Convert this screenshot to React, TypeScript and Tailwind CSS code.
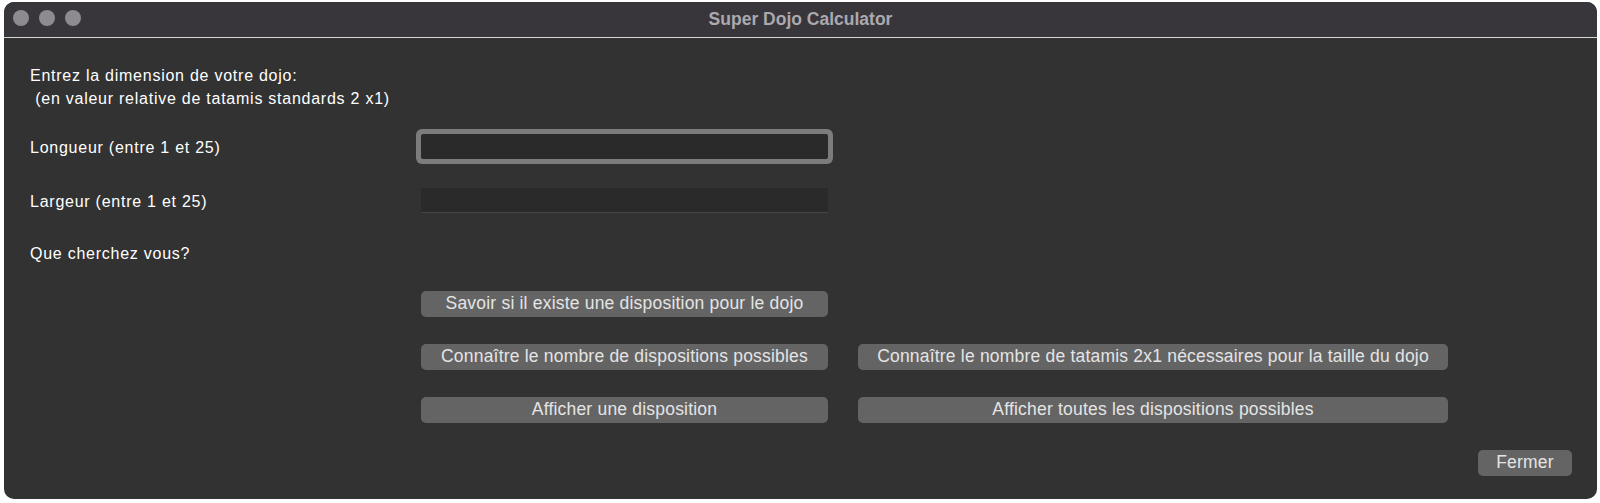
import { useState } from "react";

const leftButtons = [
  "Savoir si il existe une disposition pour le dojo",
  "Connaître le nombre de dispositions possibles",
  "Afficher une disposition",
];

const rightButtons = [
  null,
  "Connaître le nombre de tatamis 2x1 nécessaires pour la taille du dojo",
  "Afficher toutes les dispositions possibles",
];

function MacButton({ label, className = "" }: { label: string; className?: string }) {
  return (
    <button
      className={`h-[26px] rounded-[5px] bg-[#646464] text-[17.5px] leading-none tracking-[0.2px] text-[#e4e4e4] font-['Liberation_Sans',Arial,sans-serif] ${className}`}
    >
      {label}
    </button>
  );
}

export default function App() {
  const [longueur, setLongueur] = useState("");
  const [largeur, setLargeur] = useState("");

  return (
    <div className="min-h-[503px] w-[1600px] bg-white pl-[4px] pt-[2px]">
      <div className="flex h-[497px] w-[1593px] flex-col overflow-hidden rounded-[10px] bg-[#323232] font-['Liberation_Sans',Arial,sans-serif]">
        {/* Title bar */}
        <div className="relative flex h-[36px] shrink-0 items-center justify-center border-b border-[#d6d6d6] bg-[#38363b]">
          <div className="absolute left-[9px] top-[8px] flex gap-[10px]">
            <span className="h-[16px] w-[16px] rounded-full bg-[#8d8a90]" />
            <span className="h-[16px] w-[16px] rounded-full bg-[#8d8a90]" />
            <span className="h-[16px] w-[16px] rounded-full bg-[#8d8a90]" />
          </div>
          <span className="text-[17.5px] font-bold text-[#aba9ae]">Super Dojo Calculator</span>
        </div>

        {/* Body */}
        <div className="flex flex-col pt-[26px] pr-[25px] text-[16px] tracking-[0.75px] text-white">
          <div className="pl-[26px] leading-[23px]">
            <p>Entrez la dimension de votre dojo:</p>
            <p className="whitespace-pre"> (en valeur relative de tatamis standards 2 x1)</p>
          </div>

          <div className="mt-[24px] flex h-[25px] items-center">
            <label className="mt-[3px] w-[417px] pl-[26px]">Longueur (entre 1 et 25)</label>
            <input
              value={longueur}
              onChange={(e) => setLongueur(e.target.value)}
              className="h-[25px] w-[407px] rounded-[2px] bg-[#2a2a2a] text-white outline-none ring-[5px] ring-[#7c7c7c]"
            />
          </div>

          <div className="mt-[29px] flex h-[25px] items-center">
            <label className="mt-[3px] w-[417px] pl-[26px]">Largeur (entre 1 et 25)</label>
            <input
              value={largeur}
              onChange={(e) => setLargeur(e.target.value)}
              className="h-[25px] w-[407px] border-b border-[#454545] bg-[#2a2a2a] text-white outline-none"
            />
          </div>

          <p className="mt-[30px] pl-[26px] leading-[22px]">Que cherchez vous?</p>

          <div className="mt-[26px] flex flex-col gap-[27px] pl-[417px]">
            {leftButtons.map((label, i) => (
              <div key={label} className="flex gap-[30px]">
                <MacButton label={label} className="w-[407px]" />
                {rightButtons[i] && <MacButton label={rightButtons[i] as string} className="w-[590px]" />}
              </div>
            ))}
          </div>

          <div className="mt-[27px] flex justify-end">
            <MacButton label="Fermer" className="w-[94px]" />
          </div>
        </div>
      </div>
    </div>
  );
}
